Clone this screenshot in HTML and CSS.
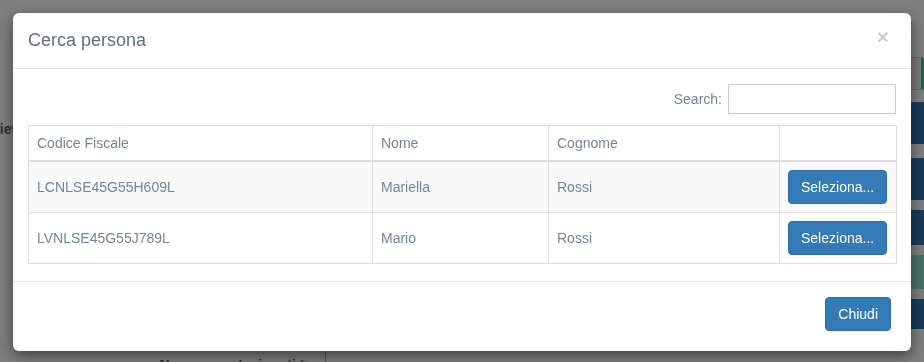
FILE: index.html
```html
<!DOCTYPE html>
<html lang="it">
<head>
  <meta charset="UTF-8" />
  <meta name="viewport" content="width=device-width, initial-scale=1.0"/>
  <title>Cerca persona</title>
  <link rel="stylesheet" href="styles.css">
</head>
<body>
  <div class="page">
    <div class="form">
      <div class="side-label">Varietà</div>
      <div class="field">
        <label class="field-label">Numero partecipanti *</label>
        <span class="field-input"></span>
      </div>
    </div>
    <div class="actions">
      <div class="act act-group"><span class="act-addon"></span></div>
      <div class="act act-blue act-1"></div>
      <div class="act act-blue act-2"></div>
      <div class="act act-blue act-3"></div>
      <div class="act act-teal"></div>
      <div class="act act-blue act-4"></div>
    </div>
  </div>

  <div class="modal">
    <div class="modal-dialog">
      <div class="modal-header">
        <button type="button" class="close">&times;</button>
        <h4 class="modal-title">Cerca persona</h4>
      </div>
      <div class="modal-body">
        <div class="search-row">
          <label for="search">Search:</label>
          <input type="search" id="search" />
        </div>
        <table class="table">
          <colgroup>
            <col style="width: 344px">
            <col style="width: 176px">
            <col style="width: 231px">
            <col style="width: 117px">
          </colgroup>
          <thead>
            <tr>
              <th>Codice Fiscale</th>
              <th>Nome</th>
              <th>Cognome</th>
              <th></th>
            </tr>
          </thead>
          <tbody>
            <tr>
              <td>LCNLSE45G55H609L</td>
              <td>Mariella</td>
              <td>Rossi</td>
              <td><button type="button" class="btn">Seleziona...</button></td>
            </tr>
            <tr>
              <td>LVNLSE45G55J789L</td>
              <td>Mario</td>
              <td>Rossi</td>
              <td><button type="button" class="btn">Seleziona...</button></td>
            </tr>
          </tbody>
        </table>
      </div>
      <div class="modal-footer">
        <button type="button" class="btn">Chiudi</button>
      </div>
    </div>
  </div>
</body>
</html>
```

FILE: styles.css
```css
* {
  box-sizing: border-box;
}

body {
  margin: 0;
  width: 924px;
  height: 362px;
  overflow: hidden;
  background: #7f7f7f;
  font-family: "Liberation Sans", Arial, sans-serif;
  font-size: 14px;
  line-height: 20px;
}

/* page behind the backdrop (already dimmed) */
.page {
  display: flex;
  height: 100%;
  overflow: hidden;
}

.form {
  flex: 1;
  display: flex;
  flex-direction: column;
}

.side-label {
  margin-top: 119px;
  width: 24px;
  display: flex;
  justify-content: flex-end;
  white-space: nowrap;
  font-weight: bold;
  color: #2a2f38;
}

.field {
  display: flex;
  margin-top: 211px;
  height: 12px;
  overflow: hidden;
}

.field-label {
  width: 305px;
  padding-top: 5px;
  text-align: right;
  white-space: nowrap;
  font-weight: bold;
  color: #252c3a;
}

.field-input {
  margin-left: 20px;
  width: 300px;
  border-left: 1px solid #555;
}

.actions {
  width: 40px;
  flex-shrink: 0;
  display: flex;
  flex-direction: column;
  padding-top: 57px;
}

.act {
  width: 100%;
}

.act-group {
  height: 33px;
  background: #7a7a7a;
  border-top: 1px solid #6a6a6a;
  border-bottom: 1px solid #6a6a6a;
  display: flex;
  justify-content: flex-end;
}

.act-addon {
  width: 3px;
  background: #0d6b55;
}

.act-blue {
  background: #1b3b5d;
}

.act-1 { margin-top: 12px; height: 42px; }
.act-2 { margin-top: 14px; height: 42px; }
.act-3 { margin-top: 10px; height: 35px; }
.act-4 { margin-top: 10px; height: 30px; }

.act-teal {
  margin-top: 10px;
  height: 34px;
  background: #4b7167;
}

/* modal */
.modal {
  position: fixed;
  inset: 0;
  padding: 13px 0 0 13px;
}

.modal-dialog {
  width: 898px;
  background: #fff;
  border-radius: 6px;
  box-shadow: 0 5px 15px rgba(0, 0, 0, 0.5);
  color: #76849a;
}

.modal-header {
  padding: 15px;
  border-bottom: 1px solid #e5e5e5;
}

.modal-title {
  margin: 0;
  font-size: 18px;
  font-weight: normal;
  line-height: 25px;
  color: #5e6e86;
}

.close {
  float: right;
  margin: -2px 7px 0 0;
  padding: 0;
  border: none;
  background: none;
  font-family: "Liberation Sans", Arial, sans-serif;
  font-size: 21px;
  font-weight: bold;
  line-height: 1;
  color: #000;
  opacity: 0.2;
  text-shadow: 0 1px 0 #fff;
  cursor: pointer;
}

.modal-body {
  padding: 15px 15px 17px;
}

.search-row {
  display: flex;
  justify-content: flex-end;
  align-items: center;
  margin-bottom: 11px;
}

.search-row input {
  margin-left: 6px;
  width: 168px;
  height: 30px;
  border: 1px solid #ccc;
  border-radius: 0;
  padding: 4px 6px;
}

.table {
  width: 100%;
  table-layout: fixed;
  border-collapse: collapse;
  border: 1px solid #ddd;
}

.table th,
.table td {
  border: 1px solid #ddd;
  text-align: left;
  vertical-align: middle;
}

.table th {
  font-weight: normal;
  padding: 7px 8px;
  border-bottom-width: 2px;
}

.table td {
  padding: 8px;
}

.table tbody tr:nth-child(odd) {
  background: #f9f9f9;
}

.btn {
  padding: 6px 12px;
  border: 1px solid #2e6da4;
  border-radius: 4px;
  background: #337ab7;
  color: #fff;
  font-family: "Liberation Sans", Arial, sans-serif;
  font-size: 14px;
  line-height: 20px;
  cursor: pointer;
}

.modal-footer {
  padding: 15px 20px 20px;
  border-top: 1px solid #e5e5e5;
  text-align: right;
}
```
